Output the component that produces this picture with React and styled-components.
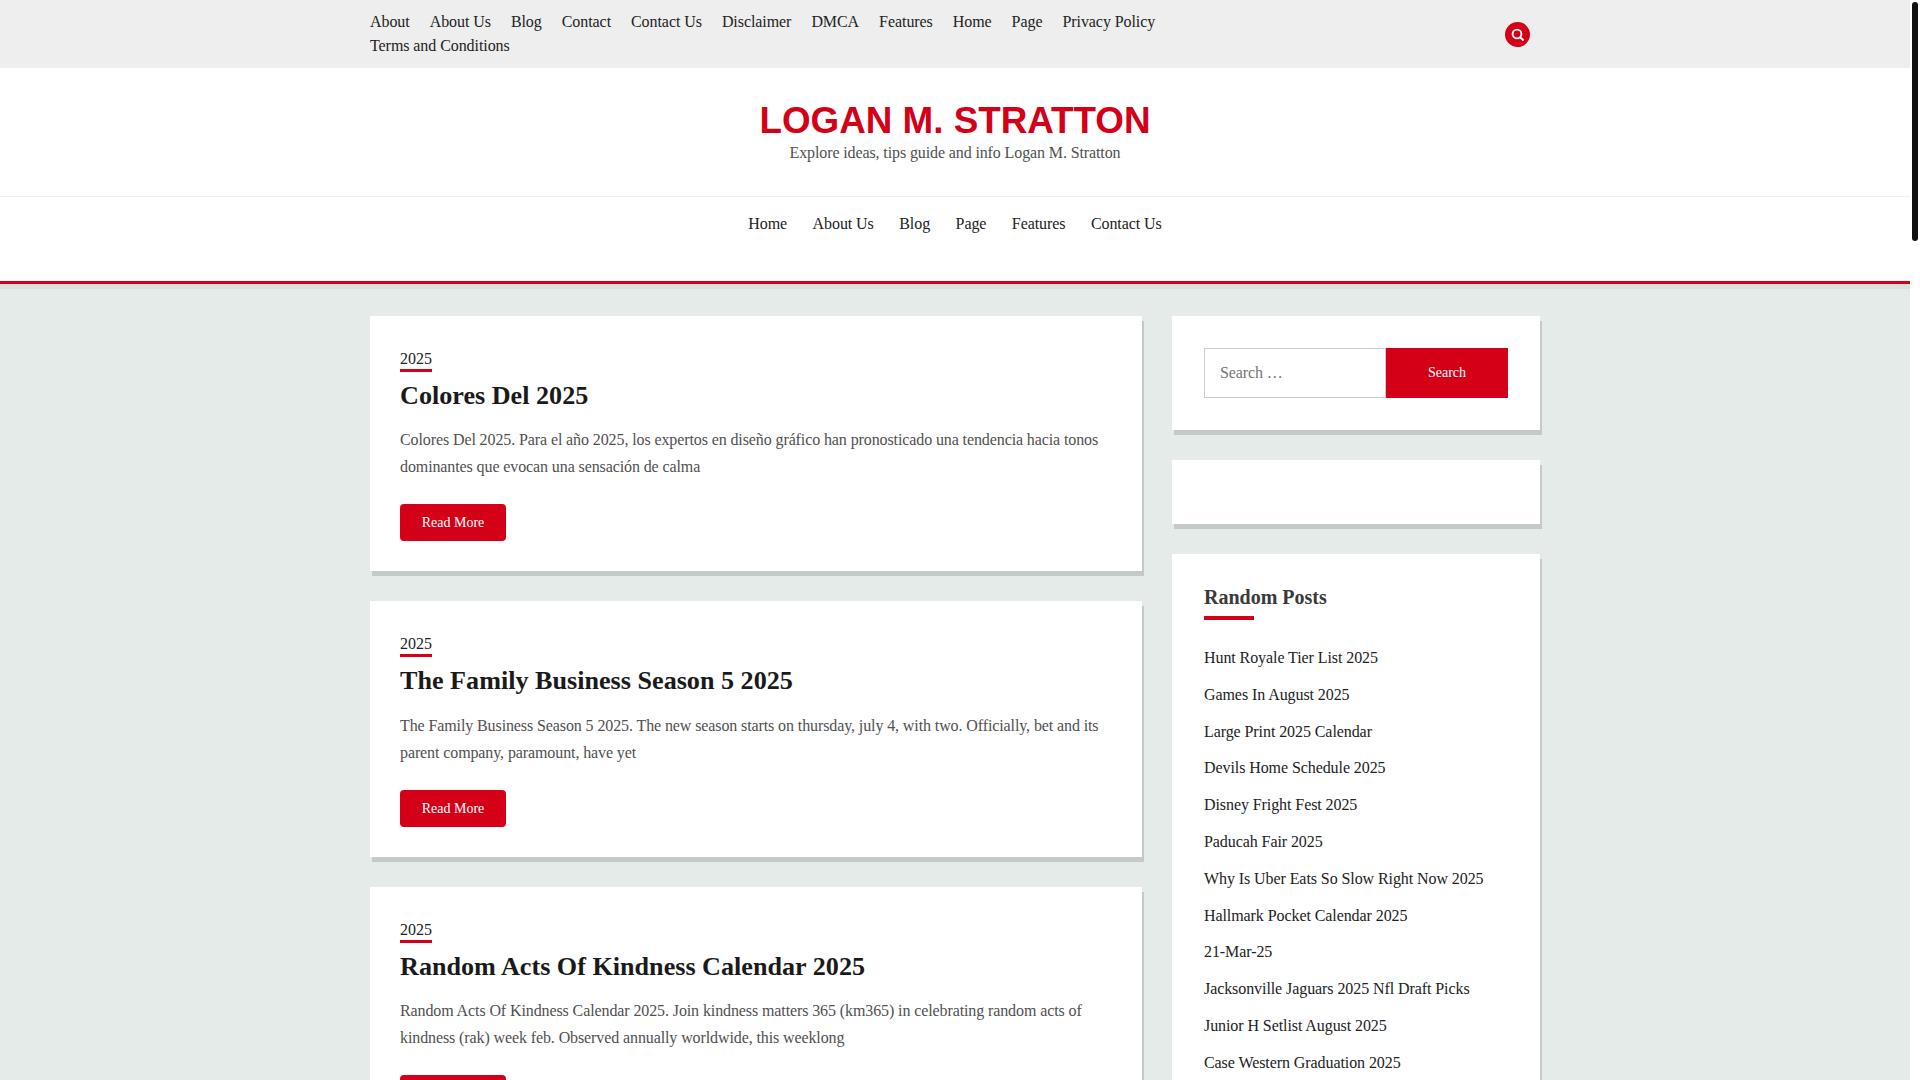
import React from 'react';
import styled, {createGlobalStyle} from 'styled-components';

const red = '#d30018';
const serif = '"Liberation Serif", "Times New Roman", serif';

const GlobalStyle = createGlobalStyle`
  html {
    background: #fff;
  }
  body {
    margin: 0;
    width: 1910px;
    background: #e5ebe9;
    font-family: ${serif};
    font-size: 16px;
    color: #222;
  }
  * {
    box-sizing: border-box;
  }
`;

const ScrollThumb = styled.div`
  position: fixed;
  top: 2px;
  right: 2px;
  width: 6px;
  height: 239px;
  background: #111;
  border-radius: 3px;
`;

const Page = styled.div`
  min-height: 4860px;
`;

const TopBar = styled.div`
  background: #eee;
  height: 68px;
`;

const Container = styled.div`
  width: 1170px;
  margin: 0 auto;
`;

const TopInner = styled(Container)`
  display: flex;
  justify-content: space-between;
  padding-top: 10px;
`;

const TopLinks = styled.nav`
  display: flex;
  flex-wrap: wrap;
  column-gap: 20px;
  width: 800px;
  line-height: 24px;
  letter-spacing: -0.07px;
`;

const TextLink = styled.a`
  color: #222;
  text-decoration: none;
`;

const SearchToggle = styled.button`
  width: 25px;
  height: 25px;
  margin: 12px 10px 0 0;
  padding: 0;
  border: 0;
  border-radius: 50%;
  background: ${red};
  display: flex;
  align-items: center;
  justify-content: center;
`;

const Header = styled.header`
  background: #fff;
  border-bottom: 3px solid ${red};
  box-shadow: 0 5px 0 #dbe0de;
  height: 216px;
`;

const Brand = styled.div`
  height: 129px;
  border-bottom: 1px solid #eee;
  text-align: center;
  padding-top: 30px;
`;

const SiteTitle = styled.h1`
  margin: 0;
  font-family: "Liberation Sans", Arial, sans-serif;
  font-size: 36.8px;
  line-height: 45px;
  font-weight: 700;
  color: ${red};
  text-transform: uppercase;
`;

const Tagline = styled.p`
  margin: 0;
  line-height: 20px;
  color: #505050;
  letter-spacing: -0.115px;
`;

const MainNav = styled.nav`
  display: flex;
  justify-content: center;
  gap: 25.5px;
  padding-top: 14px;
  line-height: 26px;
  letter-spacing: -0.08px;
`;

const Columns = styled(Container)`
  display: grid;
  grid-template-columns: 772px 368px;
  column-gap: 30px;
  align-items: start;
  padding-top: 32px;
`;

const Stack = styled.div`
  display: flex;
  flex-direction: column;
  gap: 30px;
`;

const Card = styled.article`
  background: #fff;
  box-shadow: 2px 5px 0 #c5cac8;
  padding: 32px 30px 30px;
`;

const Category = styled.a`
  display: table;
  color: #222;
  line-height: 21px;
  border-bottom: 3px solid ${red};
`;

const PostTitle = styled.h2`
  margin: 0;
  font-size: 26.15px;
  line-height: 48.4px;
  font-weight: 700;
  color: #1a1a1a;
`;

const Excerpt = styled.p`
  margin: 6px 0 0;
  line-height: 27px;
  color: #505050;
  letter-spacing: -0.105px;
`;

const ReadMore = styled.a`
  display: block;
  margin-top: 24px;
  width: 106px;
  height: 37px;
  border-radius: 4px;
  background: ${red};
  color: #fff;
  font-size: 14px;
  line-height: 37px;
  text-align: center;
`;

const Widget = styled.aside`
  background: #fff;
  box-shadow: 2px 5px 0 #c5cac8;
  padding: 32px;
  min-height: 64px;
`;

const SearchForm = styled.form`
  display: flex;
`;

const SearchInput = styled.input`
  width: 182px;
  height: 50px;
  padding: 0 15px;
  border: 1px solid #ccc;
  font-family: ${serif};
  font-size: 16px;
  letter-spacing: -0.1px;
  outline: 0;

  &::placeholder {
    color: #757575;
  }
`;

const SearchButton = styled.button`
  width: 122px;
  height: 50px;
  border: 0;
  background: ${red};
  color: #fff;
  font-family: ${serif};
  font-size: 14px;
`;

const WidgetTitle = styled.h3`
  margin: 0 0 20px;
  position: relative;
  font-size: 20px;
  line-height: 22px;
  font-weight: 700;
  padding-bottom: 12px;
  color: #3a3a3a;

  &::after {
    content: "";
    position: absolute;
    left: 0;
    bottom: 0;
    width: 50px;
    height: 4px;
    background: ${red};
  }
`;

const RandomList = styled.ul`
  margin: 0;
  padding: 0;
  list-style: none;
  letter-spacing: -0.08px;
`;

const RandomItem = styled.li`
  line-height: 36.8px;
`;

const topLinks = ['About', 'About Us', 'Blog', 'Contact', 'Contact Us', 'Disclaimer', 'DMCA', 'Features', 'Home', 'Page', 'Privacy Policy', 'Terms and Conditions'];
const mainLinks = ['Home', 'About Us', 'Blog', 'Page', 'Features', 'Contact Us'];

const posts = [
    {
        title: 'Colores Del 2025',
        excerpt: 'Colores Del 2025. Para el año 2025, los expertos en diseño gráfico han pronosticado una tendencia hacia tonos dominantes que evocan una sensación de calma',
    },
    {
        title: 'The Family Business Season 5 2025',
        excerpt: 'The Family Business Season 5 2025. The new season starts on thursday, july 4, with two. Officially, bet and its parent company, paramount, have yet',
    },
    {
        title: 'Random Acts Of Kindness Calendar 2025',
        excerpt: 'Random Acts Of Kindness Calendar 2025. Join kindness matters 365 (km365) in celebrating random acts of kindness (rak) week feb. Observed annually worldwide, this weeklong',
    },
];

const randomPosts = [
    'Hunt Royale Tier List 2025',
    'Games In August 2025',
    'Large Print 2025 Calendar',
    'Devils Home Schedule 2025',
    'Disney Fright Fest 2025',
    'Paducah Fair 2025',
    'Why Is Uber Eats So Slow Right Now 2025',
    'Hallmark Pocket Calendar 2025',
    '21-Mar-25',
    'Jacksonville Jaguars 2025 Nfl Draft Picks',
    'Junior H Setlist August 2025',
    'Case Western Graduation 2025',
];

export default function App() {
    return (
        <Page>
            <GlobalStyle/>
            <ScrollThumb/>
            <TopBar>
                <TopInner>
                    <TopLinks>
                        {topLinks.map(link => <TextLink key={link}>{link}</TextLink>)}
                    </TopLinks>
                    <SearchToggle aria-label="Search">
                        <svg width="15" height="15" viewBox="0 0 15 15" fill="none" stroke="#fff">
                            <circle cx="7" cy="7" r="4.4" strokeWidth="1.9"/>
                            <path d="M10.2 10.2 13.6 13.4" strokeWidth="2"/>
                        </svg>
                    </SearchToggle>
                </TopInner>
            </TopBar>
            <Header>
                <Brand>
                    <SiteTitle>Logan M. Stratton</SiteTitle>
                    <Tagline>Explore ideas, tips guide and info Logan M. Stratton</Tagline>
                </Brand>
                <MainNav>
                    {mainLinks.map(link => <TextLink key={link}>{link}</TextLink>)}
                </MainNav>
            </Header>
            <Columns>
                <Stack>
                    {posts.map(post => (
                        <Card key={post.title}>
                            <Category>2025</Category>
                            <PostTitle>{post.title}</PostTitle>
                            <Excerpt>{post.excerpt}</Excerpt>
                            <ReadMore>Read More</ReadMore>
                        </Card>
                    ))}
                </Stack>
                <Stack>
                    <Widget>
                        <SearchForm>
                            <SearchInput placeholder="Search …"/>
                            <SearchButton type="button">Search</SearchButton>
                        </SearchForm>
                    </Widget>
                    <Widget/>
                    <Widget>
                        <WidgetTitle>Random Posts</WidgetTitle>
                        <RandomList>
                            {randomPosts.map(item => <RandomItem key={item}>{item}</RandomItem>)}
                        </RandomList>
                    </Widget>
                </Stack>
            </Columns>
        </Page>
    );
}
